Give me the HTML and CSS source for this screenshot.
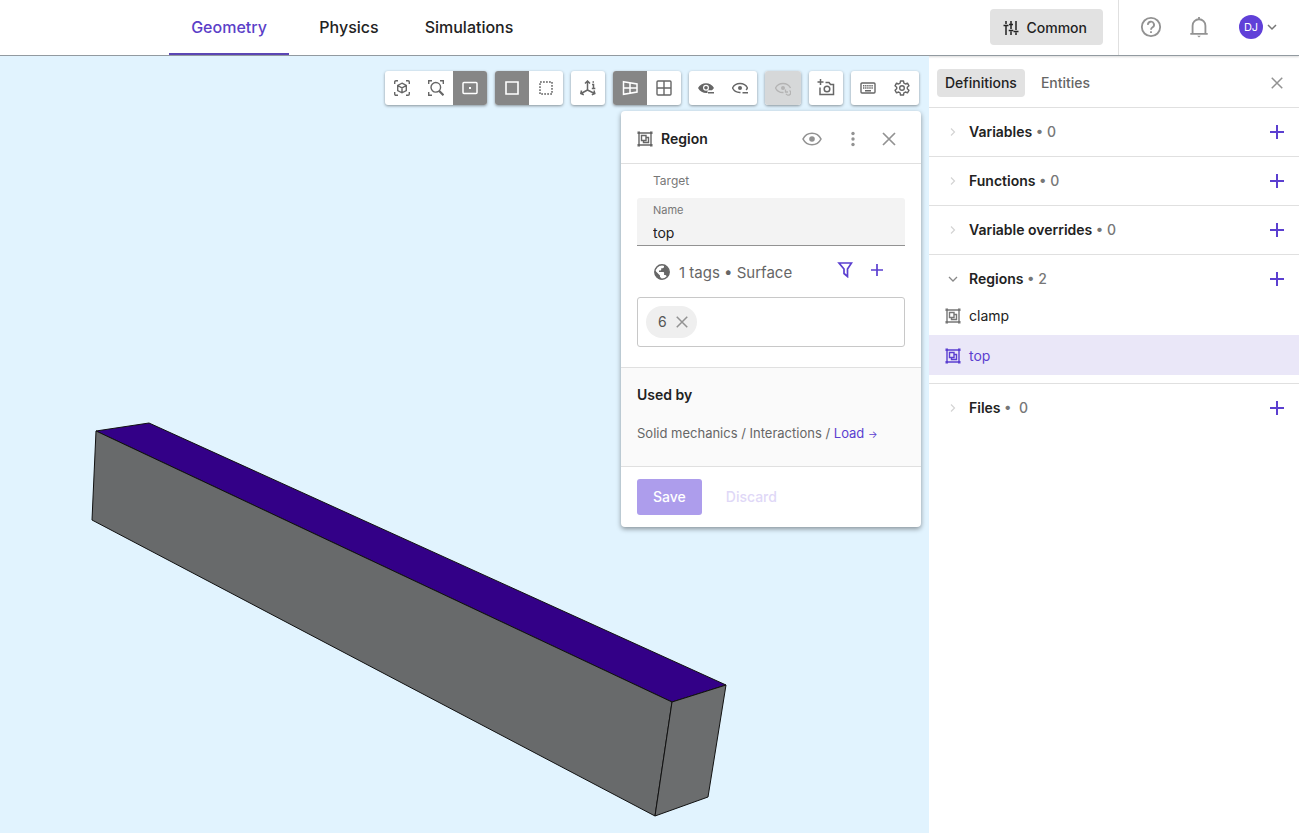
FILE: index.html
```html
<!DOCTYPE html>
<html lang="en">
<head>
  <meta charset="utf-8">
  <title>Geometry</title>
  <link rel="stylesheet" href="styles.css">
</head>
<body>
  <svg class="icon-defs" aria-hidden="true">
    <symbol id="region" viewBox="0 0 16 16">
      <path d="M2 2h12v12H2z" fill="none" stroke="currentColor" stroke-width="1.4"/>
      <path d="M.5.5h2.500v2.500H.5zM13 .5h2.500v2.500H13zM.5 13h2.500v2.500H.5zM13 13h2.500v2.500H13z" fill="currentColor"/>
      <path d="M4.500 4.500h4.500v5H4.500zM9 6.500h2.500v5h-5v-2" fill="none" stroke="currentColor" stroke-width="1.400"/>
    </symbol>
    <symbol id="plus" viewBox="0 0 16 16">
      <path d="M8 1v14M1 8h14" fill="none" stroke="currentColor" stroke-width="2"/>
    </symbol>
    <symbol id="close" viewBox="0 0 16 16">
      <path d="M2 2l12 12M14 2L2 14" fill="none" stroke="currentColor" stroke-width="1.700"/>
    </symbol>
    <symbol id="chevron" viewBox="0 0 16 16">
      <path d="M6 4.500L9.500 8 6 11.500" fill="none" stroke="currentColor" stroke-width="1.200"/>
    </symbol>
    <symbol id="chevron-down" viewBox="0 0 16 16">
      <path d="M4 6l4 4 4-4" fill="none" stroke="currentColor" stroke-width="1.300"/>
    </symbol>
    <symbol id="eye" viewBox="0 0 20 20">
      <path d="M1 10C3 6 6.300 4.200 10 4.200S17 6 19 10c-2 4-5.300 5.800-9 5.800S3 14 1 10z" fill="none" stroke="currentColor" stroke-width="1.600"/>
      <circle cx="10" cy="10" r="2.800" fill="currentColor"/>
    </symbol>
  </svg>

  <header class="header">
    <nav class="tabs">
      <a class="tab active" href="#geometry">Geometry</a>
      <a class="tab" href="#physics">Physics</a>
      <a class="tab" href="#simulations">Simulations</a>
    </nav>
    <div class="header-right">
      <button class="common-button">
        <svg class="icon" viewBox="0 0 16 16" fill="none" stroke="currentColor" stroke-width="1.500"><path d="M3 1v3M3 6v9M.5 5.500h5M8 1v8M8 11.500V15M5.700 10.500h4.600M6 4.500h4M13 1v9M13 12.500V15M10.500 11.500h5"/></svg>
        Common
      </button>
      <div class="account">
        <button class="icon-button" aria-label="Help">
          <svg class="icon-large" viewBox="0 0 24 24" fill="none" stroke="currentColor" stroke-width="2"><circle cx="12" cy="12" r="10"/><path d="M8.700 9.700a3.300 3.300 0 1 1 5 2.600c-1.100.7-1.700 1.300-1.700 2.700"/><path d="M12 16.500v2"/></svg>
        </button>
        <button class="icon-button" aria-label="Notifications">
          <svg class="icon-large" viewBox="0 0 24 24" fill="none" stroke="currentColor" stroke-width="2"><path d="M2.500 19.500h19M5 19.500V10.500a7 7 0 0 1 14 0v9M12 1v2.500"/><path d="M10 21.500h4l-2 2z" fill="currentColor" stroke="none"/></svg>
        </button>
        <button class="user" aria-label="Account menu">
          <span class="avatar">DJ</span>
          <svg class="icon" viewBox="0 0 16 16" fill="none" stroke="currentColor" stroke-width="1.500"><path d="M4 6l4 4 4-4"/></svg>
        </button>
      </div>
    </div>
  </header>

  <main class="workspace">
    <section class="viewport">
      <svg class="scene" width="929" height="777" viewBox="0 56 929 777" stroke="#111" stroke-width="1" stroke-linejoin="round">
        <path d="M96 431L149 423 726 685 672 702z" fill="#330087"/>
        <path d="M96 431L672 702 655 816 92 520z" fill="#686a6b"/>
        <path d="M672 702L726 685 708 797 655 816z" fill="#6b6d6e"/>
      </svg>

      <div class="toolbar">
        <div class="tool-group">
          <button class="tool" aria-label="Fit view">
            <svg class="icon" viewBox="0 0 16 16" fill="none" stroke="currentColor" stroke-width="1.400"><path d="M.7 4V2q0-1.300 1.300-1.300h2M12 .7h2q1.300 0 1.300 1.300v2M15.300 12v2q0 1.300-1.300 1.300h-2M4 15.300H2Q.7 15.300.7 14v-2M8 3.200l4.300 2.300v5L8 12.800l-4.300-2.300v-5zM3.700 5.500L8 7.900l4.300-2.400M8 8v4.700"/></svg>
          </button>
          <button class="tool" aria-label="Zoom to area">
            <svg class="icon" viewBox="0 0 16 16" fill="none" stroke="currentColor" stroke-width="1.400"><path d="M.7 4V.7H4M12 .7h3.300V4M4 15.300H.7V12"/><circle cx="7.800" cy="7.300" r="4.800"/><path d="M11 10.700l4.500 4.500" stroke-width="2.200"/></svg>
          </button>
          <button class="tool selected" aria-label="Center">
            <svg class="icon" viewBox="0 0 16 16" fill="none" stroke="currentColor" stroke-width="1.500"><rect x="1" y="2.500" width="14" height="11" rx="1"/><path d="M7 7h2v2H7z" fill="currentColor" stroke="none"/></svg>
          </button>
        </div>
        <div class="tool-group">
          <button class="tool selected" aria-label="Solid selection">
            <svg class="icon" viewBox="0 0 16 16" fill="none" stroke="currentColor" stroke-width="1.600"><path d="M2 2h12v12H2z"/></svg>
          </button>
          <button class="tool" aria-label="Box selection">
            <svg class="icon" viewBox="0 0 16 16" fill="none" stroke="currentColor" stroke-width="1.500"><path d="M2 2h12v12H2z" stroke-dasharray="1.800 1.200"/></svg>
          </button>
        </div>
        <div class="tool-group">
          <button class="tool" aria-label="Axes">
            <svg class="icon" viewBox="0 0 16 16" fill="none" stroke="currentColor" stroke-width="1.500"><path d="M7.500 10V1M5 3.500L7.500 1 10 3.500M7.500 10L1 13.500M7.500 10L14.500 13.500M1.500 10.500L.8 13.500l3 1.200M14 10.500l.8 3-3 1.200M12 4.500h1.500v4M11.800 8.500h3.500M12.500 2h1.500"/></svg>
          </button>
        </div>
        <div class="tool-group">
          <button class="tool selected" aria-label="Perspective">
            <svg class="icon" viewBox="0 0 16 16" fill="none" stroke="currentColor" stroke-width="1.500"><path d="M1.500 1.700L15 4v8L1.500 14.300zM8 3v10M1.500 8H15"/></svg>
          </button>
          <button class="tool" aria-label="Orthographic">
            <svg class="icon" viewBox="0 0 16 16" fill="none" stroke="currentColor" stroke-width="1.400"><rect x="1" y="1" width="14" height="14" rx="1"/><path d="M8 1v14M1 8h14"/></svg>
          </button>
        </div>
        <div class="tool-group">
          <button class="tool" aria-label="Hide selected">
            <svg class="icon" viewBox="0 0 16 16"><path d="M0 8c3-6.500 13-6.500 16 0l-2 2.200H9.500V13C6 13.500 2 11.800 0 8z" fill="currentColor"/><circle cx="8" cy="7.800" r="3" fill="#fff"/><circle cx="8" cy="7.800" r="1.800" fill="currentColor"/><path d="M10 12.700h6" stroke="currentColor" stroke-width="1.600"/></svg>
          </button>
          <button class="tool" aria-label="Hide others">
            <svg class="icon" viewBox="0 0 16 16"><path d="M8.500 12.500C5 12.700 2 11 .5 8 3.500 2 12.500 2 15.500 8l-1.300 2" fill="none" stroke="currentColor" stroke-width="1.400"/><circle cx="8" cy="8" r="2" fill="currentColor"/><path d="M10.500 12.700H16" stroke="currentColor" stroke-width="1.500"/></svg>
          </button>
        </div>
        <div class="tool-group">
          <button class="tool tool-wide" disabled aria-label="Reset visibility">
            <svg class="icon" viewBox="0 0 16 16" fill="none" stroke="currentColor" stroke-width="1.300"><path d="M8.500 12.500C5 12.700 2 11 .5 8 3.500 2 12.500 2 15.500 8"/><circle cx="8" cy="8" r="2" fill="currentColor" stroke="none"/><path d="M10.500 9.500v2.500H13M14.500 10.500a2.500 2.500 0 1 1-3.500 3.300"/></svg>
          </button>
        </div>
        <div class="tool-group">
          <button class="tool" aria-label="Take screenshot">
            <svg class="icon-large-tool" viewBox="0 0 18 18" fill="none" stroke="currentColor" stroke-width="1.500"><path d="M3.500 0v6M.5 3h6M3 8.500V15.500h13.500V5.500h-3L12 3.500H8.500"/><circle cx="10" cy="10" r="2.800"/></svg>
          </button>
        </div>
        <div class="tool-group">
          <button class="tool" aria-label="Keyboard shortcuts">
            <svg class="icon" viewBox="0 0 16 16" fill="none" stroke="currentColor" stroke-width="1.400"><rect x="1" y="3" width="14" height="10" rx="1"/><path d="M3 5.700h10M3 8h10" stroke-dasharray="1.400 .7"/><path d="M5 10.700h6"/></svg>
          </button>
          <button class="tool" aria-label="Settings">
            <svg class="icon" viewBox="0 0 16 16" fill="none" stroke="currentColor" stroke-width="1.400" stroke-linejoin="round"><path d="M6.500 1h3l.4 2.200 1.500.8 2.100-.8L15 5.800l-1.700 1.400v1.600l1.700 1.400-1.500 2.600-2.100-.8-1.500.8-.4 2.200h-3l-.4-2.200-1.500-.8-2.100.8L1 10.200l1.700-1.400V7.200L1 5.800l1.500-2.600 2.100.8 1.500-.8z"/><circle cx="8" cy="8" r="2.300"/></svg>
          </button>
        </div>
      </div>

      <form class="panel">
        <div class="panel-header">
          <svg class="icon"><use href="#region"/></svg>
          <h2>Region</h2>
          <button type="button" class="icon-button show-region" aria-label="Show region"><svg class="icon-eye"><use href="#eye"/></svg></button>
          <button type="button" class="icon-button" aria-label="More"><svg class="icon" viewBox="0 0 16 16" fill="currentColor"><circle cx="8" cy="2.500" r="1.700"/><circle cx="8" cy="8" r="1.700"/><circle cx="8" cy="13.500" r="1.700"/></svg></button>
          <button type="button" class="icon-button" aria-label="Close"><svg class="icon"><use href="#close"/></svg></button>
        </div>
        <div class="panel-body">
          <div class="target">Target</div>
          <div class="field">
            <label for="name">Name</label>
            <input id="name" type="text" value="top">
          </div>
          <div class="tags-header">
            <svg class="icon" viewBox="0 0 16 16"><circle cx="8" cy="8" r="7.200" fill="none" stroke="currentColor" stroke-width="1.500"/><path d="M1 6.500l5 5V13l1.300 1v1.500C3 15 .5 11.500 1 6.500zM10 1.200v1.600c0 .8-.6 1.400-1.400 1.400H7.200v1.500c0 .5-.3.800-.8.800H5V8h4.300c.5 0 .8.300.8.800V11h.8c.7 0 1.300.4 1.500 1l.8 1c3-3 2.800-9-3.100-11.800z" fill="currentColor"/></svg>
            <span class="tags-label">1 tags • Surface</span>
            <button type="button" class="icon-button accent" aria-label="Filter"><svg class="icon" viewBox="0 0 16 16" fill="none" stroke="currentColor" stroke-width="1.700"><path d="M2 1h12.500L10.500 7v7.500L7 11.500V7z"/></svg></button>
            <button type="button" class="icon-button accent" aria-label="Add tag"><svg class="icon" viewBox="0 0 16 16"><path d="M8 2v12M2 8h12" stroke="currentColor" stroke-width="1.700"/></svg></button>
          </div>
          <div class="tags-box">
            <span class="chip">6 <button type="button" class="icon-button" aria-label="Remove 6"><svg class="icon-small"><use href="#close"/></svg></button></span>
          </div>
        </div>
        <div class="used-by">
          <h3>Used by</h3>
          <p>Solid mechanics / Interactions / <a href="#load">Load <span class="arrow">→</span></a></p>
        </div>
        <div class="panel-footer">
          <button class="save" disabled>Save</button>
          <button type="button" class="discard" disabled>Discard</button>
        </div>
      </form>
    </section>

    <aside class="sidebar">
      <div class="sidebar-tabs">
        <button class="side-tab active">Definitions</button>
        <button class="side-tab">Entities</button>
        <button class="icon-button side-close" aria-label="Close sidebar"><svg class="icon-small"><use href="#close"/></svg></button>
      </div>
      <section class="section">
        <div class="section-header">
          <svg class="icon chevron"><use href="#chevron"/></svg>
          <h3>Variables <span>• 0</span></h3>
          <button class="icon-button accent" aria-label="Add variable"><svg class="icon"><use href="#plus"/></svg></button>
        </div>
      </section>
      <section class="section">
        <div class="section-header">
          <svg class="icon chevron"><use href="#chevron"/></svg>
          <h3>Functions <span>• 0</span></h3>
          <button class="icon-button accent" aria-label="Add function"><svg class="icon"><use href="#plus"/></svg></button>
        </div>
      </section>
      <section class="section">
        <div class="section-header">
          <svg class="icon chevron"><use href="#chevron"/></svg>
          <h3>Variable overrides <span>• 0</span></h3>
          <button class="icon-button accent" aria-label="Add override"><svg class="icon"><use href="#plus"/></svg></button>
        </div>
      </section>
      <section class="section open">
        <div class="section-header">
          <svg class="icon chevron"><use href="#chevron-down"/></svg>
          <h3>Regions <span>• 2</span></h3>
          <button class="icon-button accent" aria-label="Add region"><svg class="icon"><use href="#plus"/></svg></button>
        </div>
        <a class="region" href="#clamp"><svg class="icon"><use href="#region"/></svg>clamp</a>
        <a class="region active" href="#top"><svg class="icon"><use href="#region"/></svg>top</a>
      </section>
      <section class="section">
        <div class="section-header">
          <svg class="icon chevron"><use href="#chevron"/></svg>
          <h3>Files <span>•&nbsp; 0</span></h3>
          <button class="icon-button accent" aria-label="Add file"><svg class="icon"><use href="#plus"/></svg></button>
        </div>
      </section>
    </aside>
  </main>
</body>
</html>
```
FILE: styles.css
```css
* {
  box-sizing: border-box;
}

body {
  margin: 0;
  height: 100vh;
  display: flex;
  flex-direction: column;
  overflow: hidden;
  font-family: Inter, sans-serif;
  font-size: 14px;
  line-height: 20px;
  color: #222;
  background: #fff;
}

h2, h3, p {
  margin: 0;
}

h2, h3 {
  font-size: 14px;
  font-weight: 600;
}

a {
  color: #5b3fd0;
  text-decoration: none;
}

button, input {
  font: inherit;
  color: inherit;
  border: 0;
  padding: 0;
  background: none;
}

svg {
  display: block;
  flex-shrink: 0;
}

.icon-defs {
  display: none;
}

.icon {
  width: 16px;
  height: 16px;
}

.icon-small {
  width: 14px;
  height: 14px;
}

.icon-large {
  width: 22px;
  height: 22px;
}

.icon-large-tool {
  width: 18px;
  height: 18px;
}

.icon-eye {
  width: 20px;
  height: 20px;
}

.icon-button {
  display: flex;
  align-items: center;
  justify-content: center;
  color: #929292;
}

.accent {
  color: #5b3fd0;
}

/* Header */
.header {
  display: flex;
  justify-content: space-between;
  height: 56px;
  flex-shrink: 0;
  border-bottom: 1px solid #929aa0;
  box-shadow: 0 1px 2px rgba(0, 0, 0, 0.15);
  position: relative;
}

.tabs {
  display: flex;
  margin-left: 169px;
}

.tab {
  width: 120px;
  padding-top: 17px;
  text-align: center;
  font-size: 16px;
  font-weight: 500;
  color: #222;
  border-bottom: 2px solid transparent;
}

.tab.active {
  color: #5b3fc8;
  border-color: #5b46b4;
}

.header-right {
  display: flex;
}

.common-button {
  display: flex;
  align-items: center;
  gap: 8px;
  height: 36px;
  margin: 9px 15px 0 0;
  padding: 1px 16px 0 13px;
  border-radius: 4px;
  background: #e2e2e2;
  font-weight: 500;
}

.account {
  display: flex;
  align-items: center;
  gap: 26px;
  padding: 0 19px 1px 21px;
  border-left: 1px solid #e0e0e0;
}

.user {
  display: flex;
  align-items: center;
  gap: 1px;
  margin-left: 3px;
  color: #777;
}

.avatar {
  width: 24px;
  height: 24px;
  border-radius: 50%;
  background: #6040d8;
  color: #fff;
  font-size: 11px;
  line-height: 24px;
}

/* Viewport */
.workspace {
  display: flex;
  flex: 1;
  min-height: 0;
}

.viewport {
  flex: 1;
  display: flex;
  flex-direction: column;
  align-items: flex-end;
  padding: 15px 8px 0 0;
  position: relative;
  overflow: hidden;
  background: #e1f3fe;
}

.scene {
  position: absolute;
  top: 0;
  left: 0;
}

.toolbar {
  display: flex;
  gap: 8px;
  margin-right: 2px;
  position: relative;
}

.tool-group {
  display: flex;
  overflow: hidden;
  border-radius: 3px;
  background: #fff;
  box-shadow: 0 1px 3px rgba(0, 0, 0, 0.4);
}

.tool {
  width: 34px;
  height: 34px;
  display: flex;
  align-items: center;
  justify-content: center;
  color: #666;
}

.tool.selected {
  background: #868686;
  color: #fff;
}

.tool-wide {
  width: 36px;
}

.tool:disabled {
  background: #d6d8d9;
  color: #b4b4b4;
}

/* Region panel */
.panel {
  width: 300px;
  margin-top: 6px;
  border-radius: 4px;
  background: #fff;
  box-shadow: 0 2px 5px rgba(0, 0, 0, 0.4);
  position: relative;
}

.panel-header {
  display: flex;
  align-items: center;
  gap: 20px;
  height: 53px;
  padding: 4px 24px 0 16px;
  border-bottom: 1px solid #e0e0e0;
  color: #666;
}

.panel-header h2 {
  flex: 1;
  margin-left: -12px;
  color: #222;
}

.show-region {
  margin-right: 3px;
}

.panel-body {
  padding: 0 16px 20px;
}

.target {
  padding: 7px 16px;
  font-size: 12px;
  color: #777;
}

.field {
  display: flex;
  flex-direction: column;
  height: 48px;
  padding: 4px 16px 0;
  border-bottom: 1px solid #929292;
  border-radius: 3px 3px 0 0;
  background: #f3f3f3;
}

.field label {
  font-size: 11px;
  line-height: 16px;
  color: #777;
}

.field input {
  height: 28px;
  width: 100%;
  padding-top: 2px;
  outline: none;
}

.tags-header {
  display: flex;
  align-items: center;
  gap: 16px;
  height: 51px;
  padding: 0 20px 0 17px;
  color: #666;
}

.tags-label {
  flex: 1;
  margin-left: -7px;
  padding-top: 3px;
  font-size: 15px;
}

.tags-header .icon-button {
  padding-bottom: 3px;
}

.tags-box {
  display: flex;
  height: 50px;
  padding: 8px;
  border: 1px solid #c8c8c8;
  border-radius: 3px;
}

.chip {
  display: flex;
  align-items: center;
  gap: 8px;
  padding: 0 8px 0 12px;
  border-radius: 16px;
  background: #efefef;
  color: #555;
}

.used-by {
  padding: 17px 16px 22px;
  border-top: 1px solid #e0e0e0;
  background: #fafafa;
}

.used-by p {
  margin-top: 18px;
  font-size: 13px;
  color: #666;
}

.arrow {
  font-size: 10px;
}

.panel-footer {
  display: flex;
  gap: 8px;
  padding: 12px 16px;
  border-top: 1px solid #e0e0e0;
}

.save, .discard {
  height: 36px;
  padding: 0 16px;
  border-radius: 3px;
  font-weight: 500;
}

.save {
  background: #ad9dec;
  color: #fff;
}

.discard {
  color: #dfd8f7;
}

/* Sidebar */
.sidebar {
  width: 370px;
  flex-shrink: 0;
}

.sidebar-tabs {
  display: flex;
  align-items: center;
  gap: 8px;
  height: 51px;
  padding: 3px 15px 0 8px;
}

.side-tab {
  height: 28px;
  padding: 0 8px;
  border-radius: 4px;
  font-weight: 500;
  color: #666;
}

.side-tab.active {
  background: #e2e2e2;
  color: #222;
}

.side-close {
  margin-left: auto;
}

.section {
  border-top: 1px solid #e0e0e0;
}

.section.open {
  padding-bottom: 8px;
}

.section-header {
  display: flex;
  align-items: center;
  gap: 8px;
  height: 48px;
  padding: 0 14px 0 16px;
}

.section.open .section-header {
  height: 40px;
  padding-top: 8px;
}

.section-header h3 {
  flex: 1;
}

.section-header span {
  font-weight: 500;
  color: #777;
}

.chevron {
  color: #d4d4d4;
}

.open .chevron {
  color: #888;
}

.region {
  display: flex;
  align-items: center;
  gap: 8px;
  height: 40px;
  padding: 1px 16px 0;
  color: #222;
}

.region .icon {
  color: #777;
}

.region.active,
.region.active .icon {
  color: #5b3fd0;
}

.region.active {
  background: #eae7f8;
}
```
